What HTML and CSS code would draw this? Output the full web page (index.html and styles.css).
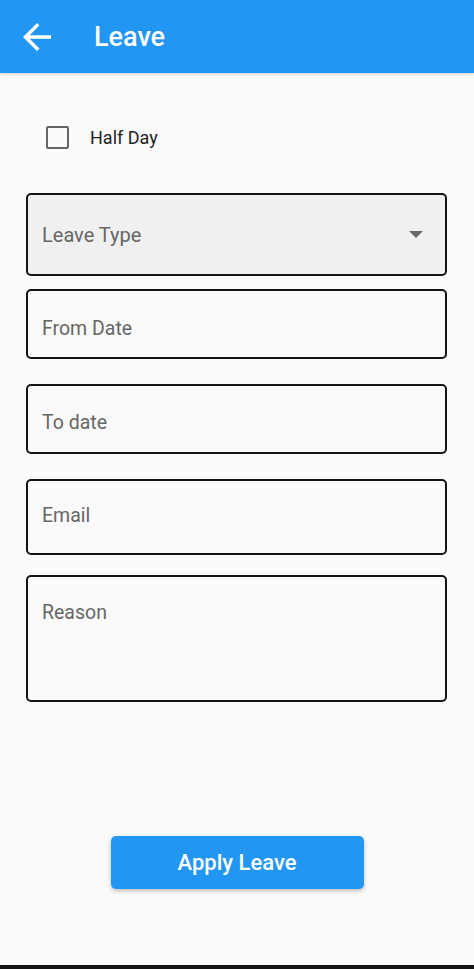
FILE: index.html
```html
<!DOCTYPE html>
<html lang="en">
<head>
<meta charset="utf-8">
<title>Leave</title>
<link rel="stylesheet" href="styles.css">
</head>
<body>
<div class="page">
  <header class="appbar">
    <svg class="back" viewBox="0 0 24 24" width="42" height="42" aria-hidden="true">
      <path d="M20 11H7.83l5.59-5.59L12 4l-8 8 8 8 1.41-1.41L7.83 13H20v-2z" fill="#ffffff"/>
    </svg>
    <h1 class="title">Leave</h1>
  </header>
  <main class="content">
    <div class="check-row">
      <span class="checkbox"></span>
      <span class="check-label">Half Day</span>
    </div>
    <div class="field dropdown">
      <span class="placeholder">Leave Type</span>
      <span class="caret"></span>
    </div>
    <div class="field from"><span class="placeholder">From Date</span></div>
    <div class="field to"><span class="placeholder">To date</span></div>
    <div class="field email"><span class="placeholder">Email</span></div>
    <div class="field reason"><span class="placeholder">Reason</span></div>
    <div class="actions">
      <button class="apply">Apply Leave</button>
    </div>
  </main>
  <div class="navbar"></div>
</div>
</body>
</html>
```

FILE: styles.css
```css
* { box-sizing: border-box; }
html, body { margin: 0; padding: 0; }
body {
  background: #fafafa;
  font-family: Roboto, "Noto Sans", "Liberation Sans", sans-serif;
}
.page {
  display: flex;
  flex-direction: column;
  height: 100vh;
}
.appbar {
  height: 73px;
  flex: 0 0 73px;
  background: #2196f3;
  display: flex;
  align-items: center;
  padding-left: 16px;
  box-shadow: 0 1px 3px rgba(0,0,0,0.2);
}
.back { display: block; flex: 0 0 42px; margin-top: 1px; }
.title {
  margin: 0 0 0 36px;
  color: #ffffff;
  font-size: 27px;
  font-weight: 500;
  line-height: 30px;
}
.content {
  flex: 1;
  padding: 40px 27px 0 26px;
  display: flex;
  flex-direction: column;
}
.check-row {
  height: 48px;
  display: flex;
  align-items: center;
  padding-left: 20px;
}
.checkbox {
  width: 23px;
  height: 23px;
  border: 2.5px solid #666666;
  border-radius: 2px;
  margin-top: 1px;
}
.check-label {
  margin-left: 21px;
  font-size: 18px;
  color: #222222;
}
.field {
  border: 2px solid #141414;
  border-radius: 5px;
  padding-left: 14px;
  display: flex;
}
.placeholder {
  font-size: 19.5px;
  line-height: 24px;
  color: #666666;
}
.dropdown {
  margin-top: 32px;
  height: 83px;
  background: #f0f0f0;
  align-items: center;
  padding-right: 22px;
}
.dropdown .placeholder { font-size: 20px; }
.caret {
  margin-left: auto;
  width: 0;
  height: 0;
  border-left: 7px solid transparent;
  border-right: 7px solid transparent;
  border-top: 7px solid #666666;
}
.from { margin-top: 13px; height: 70px; padding-top: 26px; }
.to { margin-top: 25px; height: 70px; padding-top: 25px; }
.email { margin-top: 25px; height: 76px; padding-top: 23px; }
.reason { margin-top: 20px; height: 127px; padding-top: 24px; }
.actions {
  margin-top: 134px;
  display: flex;
  justify-content: center;
  padding-left: 1px;
}
.apply {
  width: 253px;
  height: 53px;
  border: none;
  border-radius: 5px;
  background: #2196f3;
  color: #ffffff;
  font-family: Roboto, "Noto Sans", "Liberation Sans", sans-serif;
  font-size: 22px;
  font-weight: 500;
  box-shadow: 0 2px 4px rgba(0,0,0,0.25);
}
.navbar {
  height: 4px;
  flex: 0 0 4px;
  background: #151515;
}
```
